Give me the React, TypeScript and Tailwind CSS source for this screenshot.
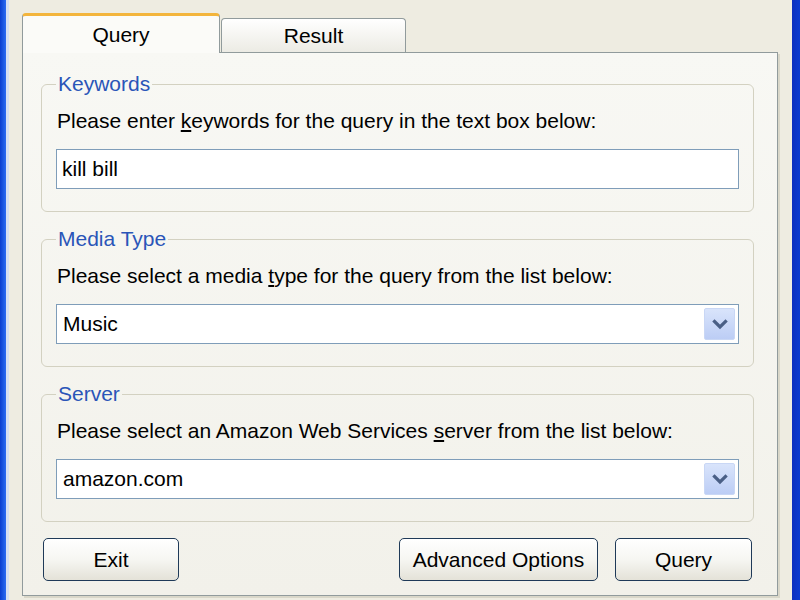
import React from 'react';

const font = { fontFamily: '"Liberation Sans", Arial, sans-serif' };

const Chevron: React.FC = () => (
  <svg width="16" height="11" viewBox="0 0 16 11">
    <path d="M2.5 2.5 L8 8 L13.5 2.5" fill="none" stroke="#4a5f86" strokeWidth="3.2" strokeLinecap="square" />
  </svg>
);

const GroupBox: React.FC<{ title: string; children: React.ReactNode }> = ({ title, children }) => (
  <fieldset className="rounded-[6px] border border-[#d3d1c1] px-[14px] pt-[13px] pb-[22px]">
    <legend className="px-[2px] text-[21px] leading-[24px] text-[#2a55b8]">{title}</legend>
    {children}
  </fieldset>
);

const Combo: React.FC<{ value: string }> = ({ value }) => (
  <div className="flex h-[40px] items-stretch border border-[#7f9db9] bg-white p-[3px]">
    <div className="flex flex-1 items-center pl-[3px] text-[21px] text-black">{value}</div>
    <div className="flex w-[31px] items-center justify-center rounded-[2px] border border-[#c9d7f5] bg-gradient-to-b from-[#d9e4fb] to-[#bccdf5]">
      <Chevron />
    </div>
  </div>
);

const XpButton: React.FC<{ label: string; width: string }> = ({ label, width }) => (
  <button
    className={`${width} flex h-[43px] items-center justify-center rounded-[5px] border border-[#1f3a58] bg-gradient-to-b from-white via-[#f6f6f2] to-[#e4e2d8] text-[21px] text-black`}
  >
    {label}
  </button>
);

export default function App() {
  return (
    <div className="flex h-[600px] w-[800px] overflow-hidden bg-[#eeece1]" style={font}>
      <div className="w-[6px] bg-gradient-to-r from-[#0a3ccf] to-[#2d6cf2]" />
      <div className="w-[3px] bg-[#d7e0f2]" />
      <div className="flex flex-1 flex-col pl-[13px] pr-[14px] pt-[13px]">
        {/* tabs */}
        <div className="relative z-10 flex h-[39px] items-end">
          <div className="-mb-px flex h-[40px] w-[198px] items-center justify-center rounded-t-[4px] border-x border-t-[3px] border-x-[#919b9c] border-t-[#f3b53c] bg-[#fbfbf8] text-[21px] text-black">
            Query
          </div>
          <div className="ml-px flex h-[34px] w-[185px] items-center justify-center rounded-t-[4px] border-x border-t border-[#919b9c] bg-gradient-to-b from-white to-[#ecebe4] pt-[1px] text-[21px] text-black">
            Result
          </div>
        </div>

        {/* panel */}
        <div className="border border-[#919b9c] bg-gradient-to-b from-[#f8f8f4] to-[#f2f1ea] pb-[14px] pl-[18px] pr-[23px] pt-[19px] shadow-[2px_2px_0_#d9d7c9]">
          <div className="flex flex-col gap-[15px]">
            <GroupBox title="Keywords">
              <div className="ml-px text-[21px] leading-[24px] text-black">
                Please enter <span className="underline">k</span>eywords for the query in the text box below:
              </div>
              <div className="mt-[16px] flex h-[40px] items-center border border-[#7f9db9] bg-white px-[5px] text-[21px] text-black">
                kill bill
              </div>
            </GroupBox>

            <GroupBox title="Media Type">
              <div className="ml-px text-[21px] leading-[24px] text-black">
                Please select a media <span className="underline">t</span>ype for the query from the list below:
              </div>
              <div className="mt-[16px]">
                <Combo value="Music" />
              </div>
            </GroupBox>

            <GroupBox title="Server">
              <div className="ml-px text-[21px] leading-[24px] text-black">
                Please select an Amazon Web Services <span className="underline">s</span>erver from the list below:
              </div>
              <div className="mt-[16px]">
                <Combo value="amazon.com" />
              </div>
            </GroupBox>
          </div>

          <div className="mt-[16px] flex items-center px-[2px]">
            <XpButton label="Exit" width="w-[136px]" />
            <div className="flex-1" />
            <XpButton label="Advanced Options" width="w-[199px]" />
            <div className="w-[17px]" />
            <XpButton label="Query" width="w-[137px]" />
          </div>
        </div>
      </div>
      <div className="w-[8px] bg-gradient-to-r from-[#0b2fbf] to-[#0a3ad0]" />
    </div>
  );
}
